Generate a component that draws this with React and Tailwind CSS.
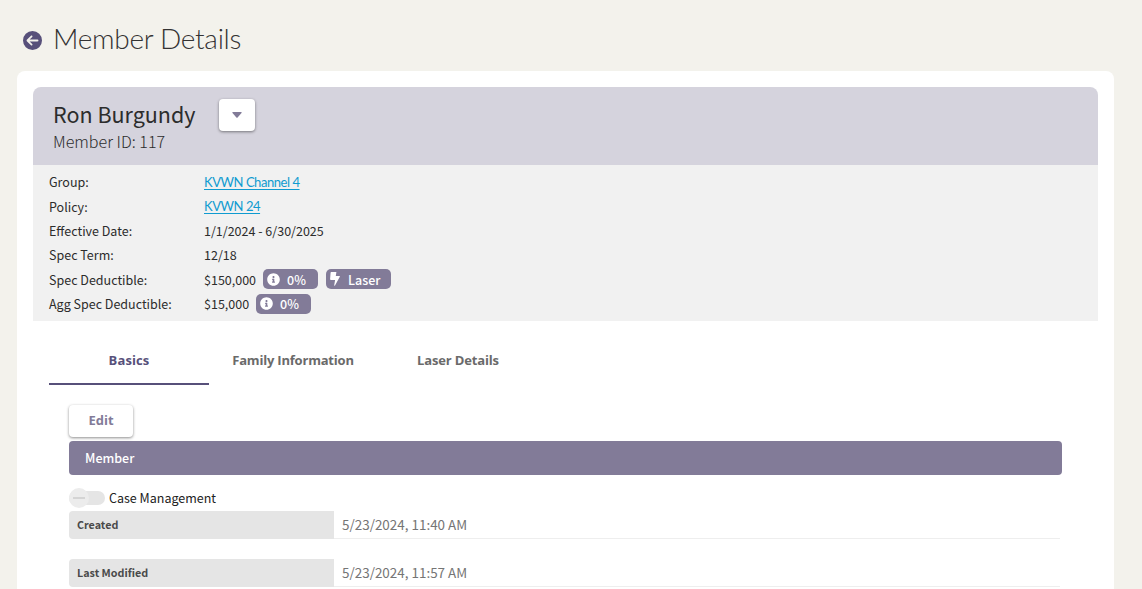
import { useState } from 'react'
import { FaInfoCircle } from 'react-icons/fa'
import { FaCircleArrowLeft } from 'react-icons/fa6'

const tabs = [
  { name: 'Basics', width: 'w-[160px]', text: 'tracking-[0.1px]' },
  { name: 'Family Information', width: 'w-[168px]', text: 'tracking-[-0.2px]' },
  { name: 'Laser Details', width: 'w-[162px]', text: 'tracking-[-0.15px]' },
]

const records = [
  { label: 'Created', value: '5/23/2024, 11:40 AM' },
  { label: 'Last Modified', value: '5/23/2024, 11:57 AM' },
]

function BoltIcon() {
  return (
    <svg viewBox="0 0 10 14" fill="currentColor" className="w-[10px] h-[14px]">
      <path d="M1.2 0H6.4L5.8 4H9.4Q10.2 4 9.8 4.8L5 13.5Q4.4 14.2 4.2 13.3L5.1 8H1Q0 8 .1 7.1L.6 .6Q.7 0 1.2 0Z" />
    </svg>
  )
}

function Badge({ icon, children, className }) {
  return (
    <span className={`h-5 mb-[2px] flex items-center rounded-[5px] bg-[#827b98] text-white font-medium pl-1 ${className}`}>
      {icon}
      <span className="leading-5 mt-px">{children}</span>
    </span>
  )
}

function DetailRow({ label, children }) {
  return (
    <div className="h-[24.4px] flex items-center">
      <div className="w-[155px] shrink-0">{label}:</div>
      {children}
    </div>
  )
}

function TextLink({ children }) {
  return (
    <a href="#" className="font-['Lato',sans-serif] text-[13px] tracking-[-0.45px] text-[#0f9bd0] underline underline-offset-2">
      {children}
    </a>
  )
}

function App() {
  const [activeTab, setActiveTab] = useState('Basics')

  return (
    <div className="h-screen overflow-hidden bg-[#f3f2ec] pl-[17px] pr-7 text-[#2c2c2c] font-['Noto_Sans_CJK_SC',sans-serif]">
      <div className="h-[71px] flex items-center pl-[6px] gap-[11px]">
        <FaCircleArrowLeft className="w-[19px] h-[19px] mt-[9px] text-[#57507a]" />
        <h1 className="mt-1 font-['Lato',sans-serif] font-light text-[28px] leading-[34px] tracking-[-0.29px] text-[#333333]">Member Details</h1>
      </div>

      <div className="h-[600px] rounded-lg bg-white p-4">
        <div className="h-[78px] rounded-t-lg bg-[#d5d3dd] pl-5 flex gap-6">
          <div className="pt-[11px]">
            <h2 className="text-[21.5px] leading-8 whitespace-nowrap">Ron Burgundy</h2>
            <p className="text-[16.1px] leading-[22px] font-light">Member ID: 117</p>
          </div>
          <button className="w-9 h-8 mt-3 flex items-center justify-center rounded bg-white shadow-[0_1px_3px_rgba(0,0,0,0.45)]">
            <svg viewBox="0 0 10 6" fill="currentColor" className="w-[10px] h-[6px] text-[#827b98]">
              <path d="M.8 0H9.2Q10 .2 9.5 1L5.6 5.5Q5 6 4.4 5.5L.5 1Q0 .2 .8 0Z" />
            </svg>
          </button>
        </div>

        <div className="h-[156px] bg-[#f1f1f1] pl-4 pt-[5.4px] text-[12.5px]">
          <DetailRow label="Group"><TextLink>KVWN Channel 4</TextLink></DetailRow>
          <DetailRow label="Policy"><TextLink>KVWN 24</TextLink></DetailRow>
          <DetailRow label="Effective Date">1/1/2024 - 6/30/2025</DetailRow>
          <DetailRow label="Spec Term">12/18</DetailRow>
          <DetailRow label="Spec Deductible">
            $150,000
            <Badge className="w-[55px] ml-[7px] gap-[7px]" icon={<FaInfoCircle className="w-[13px] h-[13px]" />}>0%</Badge>
            <Badge className="w-[65px] ml-2 gap-2" icon={<BoltIcon />}>Laser</Badge>
          </DetailRow>
          <DetailRow label="Agg Spec Deductible">
            $15,000
            <Badge className="w-[55px] ml-[7px] gap-[7px]" icon={<FaInfoCircle className="w-[13px] h-[13px]" />}>0%</Badge>
          </DetailRow>
        </div>

        <div className="h-12 mt-4 ml-4 flex font-['Open_Sans',sans-serif] text-[13px] font-bold">
          {tabs.map((tab) => (
            <button
              key={tab.name}
              onClick={() => setActiveTab(tab.name)}
              className={`${tab.width} ${tab.text} pt-px border-b-2 ${
                activeTab === tab.name ? 'border-[#57507a] text-[#57507a]' : 'border-transparent text-[#6a6a6a]'
              }`}
            >
              {tab.name}
            </button>
          ))}
        </div>

        <div className="px-9 pt-5">
          <button className="w-16 h-8 block rounded bg-white font-['Open_Sans',sans-serif] text-[13px] font-bold text-[#827b98] shadow-[0_1px_3px_rgba(0,0,0,0.45)]">
            Edit
          </button>
          <div className="h-[34px] mt-1 pl-4 flex items-center rounded bg-[#827b98] text-white text-[12.5px] font-medium">
            Member
          </div>

          <div className="h-9 pt-[10px] flex items-center gap-1 text-[12.5px] text-[#222222]">
            <div className="w-9 h-[14px] flex items-center rounded-full bg-[#e5e5e5]">
              <div className="w-5 h-5 shrink-0 flex items-center justify-center rounded-full bg-[#ececec]">
                <div className="w-3 h-[2px] bg-[#d4d4d4]" />
              </div>
            </div>
            Case Management
          </div>

          {records.map((record) => (
            <div key={record.label} className="h-7 mb-5 mr-[2px] flex">
              <div className="w-[265px] pl-2 flex items-center rounded-l bg-[#e5e5e5] text-[10.75px] font-bold text-[#4a4a4a]">
                {record.label}
              </div>
              <div className="flex-1 pl-2 pb-px flex items-center border-b border-[#eeeeee] text-[13.45px] text-[#757575]">
                {record.value}
              </div>
            </div>
          ))}
        </div>
      </div>
    </div>
  )
}

export default App
